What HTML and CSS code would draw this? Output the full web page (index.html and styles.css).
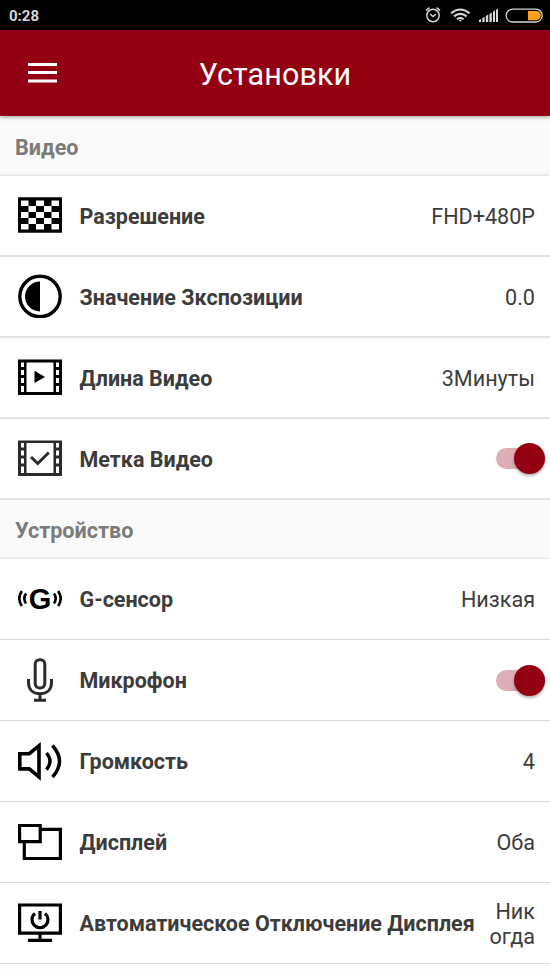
FILE: index.html
```html
<!DOCTYPE html>
<html lang="ru">
<head>
<meta charset="utf-8">
<title>Установки</title>
<link rel="stylesheet" href="styles.css">
</head>
<body>
<div class="status">
  <span class="time">0:28</span>
  <svg class="status-icons" width="120" height="20" viewBox="0 0 120 20" fill="none" stroke="#d6d6d6">
    <circle cx="8" cy="10.5" r="6.2" stroke-width="1.5"/>
    <path d="M5 9l3 2.6L11 9" stroke-width="1.4"/>
    <path d="M1 5.600L4.400 2.700M15 5.600L11.600 2.700" stroke-width="1.6"/>
    <path d="M26 8.200Q35.300 .8 44.600 8.200M29 11.400Q35.300 6.400 41.600 11.400M32 14.300Q35.300 11.800 38.600 14.300" stroke-width="2"/>
    <path d="M33.600 14.800h3.400l-1.700 2z" fill="#d6d6d6" stroke="none"/>
    <path d="M54 17v-2l2-1v3zM57.300 17v-4l2.300-1.300V17zM60.800 17v-6l2.400-1.400V17zM64.400 17V9l2.400-1.600V17zM68 17V6.700l2-1.400V17zM71 17V4.700l2-1V17z" fill="#d6d6d6" stroke="none"/>
    <rect x="81.200" y="4.200" width="36" height="12.800" rx="6.400" stroke-width="1.300"/>
    <path d="M103 6h8.200a4.600 4.600 0 0 1 0 9.200H103z" fill="#f9a11f" stroke="none"/>
  </svg>
</div>
<header class="bar">
  <svg class="menu" width="29" height="20" viewBox="0 0 29 20" fill="#fff"><path d="M0 0h29v3H0zM0 8h29v3H0zM0 16.500h29v3H0z"/></svg>
  <h1>Установки</h1>
</header>
<main>
  <h2 class="first">Видео</h2>
  <section class="video">
    <div class="row">
      <svg class="icon" viewBox="0 0 44 44"><path d="M0 4.300h44v35.400H0z"/><path fill="#fff" d="M3 7.500h7.500V13H3zM18 7.500h8V13h-8zM33.500 7.500H41V13h-7.500zM10.500 13H18v6h-7.500zM26 13h7.500v6H26zM3 19h7.500v6H3zM18 19h8v6h-8zM33.500 19H41v6h-7.500zM10.500 25H18v6h-7.500zM26 25h7.500v6H26zM3 31h7.500v5.500H3zM18 31h8v5.500h-8zM33.500 31H41v5.500h-7.500z"/></svg>
      <span class="label">Разрешение</span><span class="value">FHD+480P</span>
    </div>
    <div class="row">
      <svg class="icon" viewBox="0 0 44 44"><circle cx="22" cy="22.500" r="20.200" fill="none" stroke="#000" stroke-width="3.400"/><path d="M22 7.500v30a15 15 0 0 1 0-30z"/></svg>
      <span class="label">Значение Зкспозиции</span><span class="value">0.0</span>
    </div>
    <div class="row">
      <svg class="icon" viewBox="0 0 44 44"><path fill-rule="evenodd" d="M0 4.500h44v35.500H0zM3 7.500v4.500h3V7.500zM3 15v5h3v-5zM3 23v5h3v-5zM3 31v6h3v-6zM8.500 7.500V37h27V7.500zM38 7.500v4.500h3V7.500zM38 15v5h3v-5zM38 23v5h3v-5zM38 31v6h3v-6zM16.500 15.800V28L27 22z"/></svg>
      <span class="label">Длина Видео</span><span class="value">3Минуты</span>
    </div>
    <div class="row">
      <svg class="icon soft" viewBox="0 0 44 44"><path fill-rule="evenodd" d="M0 4.500h44v35.500H0zM3 7v4.500h3V7zM3 14.500v5h3v-5zM3 22.500v5h3v-5zM3 30.500V37h3v-6.500zM8.500 7v30h27V7zM38 7v4.500h3V7zM38 14.500v5h3v-5zM38 22.500v5h3v-5zM38 30.500V37h3v-6.500z"/><path d="M13 21l6.800 6.500 11-11" fill="none" stroke="#2b2b2b" stroke-width="3"/></svg>
      <span class="label">Метка Видео</span><span class="switch"></span>
    </div>
  </section>
  <h2>Устройство</h2>
  <section class="device">
    <div class="row">
      <svg class="icon" viewBox="0 0 44 44"><text class="g" x="22" y="31.700" text-anchor="middle">G</text><path d="M3.800 14q-5 7.500 0 15M8 16.500q-3.400 5 0 10M40.200 14q5 7.500 0 15M36 16.500q3.400 5 0 10" fill="none" stroke="#000" stroke-width="2.600"/></svg>
      <span class="label">G-сенсор</span><span class="value">Низкая</span>
    </div>
    <div class="row">
      <svg class="icon" viewBox="0 0 44 44"><g fill="none" stroke="#2b2b2b" stroke-width="3"><rect x="17.200" y="1.700" width="9.600" height="28.200" rx="4.300"/><path d="M10.500 21v3.500c0 7 4.500 11.300 11.500 11.300s11.500-4.300 11.500-11.300V21M22 36v6M16 42.300h12"/></g></svg>
      <span class="label">Микрофон</span><span class="switch"></span>
    </div>
    <div class="row">
      <svg class="icon" viewBox="0 0 44 44" fill="none" stroke="#000" stroke-width="3.600"><path d="M1.800 14.700h9.500l9.700-8v31.200l-9.700-8H1.800z"/><path d="M28.500 14q7 8.300 0 16.600M34.500 6.500q14 15.800 0 31.600" stroke-width="3.400"/></svg>
      <span class="label">Громкость</span><span class="value">4</span>
    </div>
    <div class="row">
      <svg class="icon" viewBox="0 0 44 44" fill="none" stroke="#000" stroke-width="3.200"><path d="M1.600 5.500h20.600v16.200H1.600zM22.200 9.300h20.200v29.200H6.300V22"/></svg>
      <span class="label">Дисплей</span><span class="value">Оба</span>
    </div>
    <div class="row">
      <svg class="icon" viewBox="0 0 44 44" fill="none" stroke="#000" stroke-width="3.200"><path d="M1.600 4h40.800v28.200H1.600zM22 32v7M10 39.300h24M22 10v8.500"/><path d="M17 12.500a8 8 0 1 0 10 0"/></svg>
      <span class="label">Автоматическое Отключение Дисплея</span><span class="value">Ник<br>огда</span>
    </div>
  </section>
</main>
</body>
</html>
```
FILE: styles.css
```css
* { box-sizing: border-box; }
html { overflow: hidden; }
body {
  margin: 0;
  background: #fdfdfd;
  color: #3c3c3c;
  font-family: Roboto, "Liberation Sans", sans-serif;
}
.status {
  height: 30px;
  padding: 0 5px 0 9px;
  display: flex;
  align-items: center;
  justify-content: space-between;
  background: #000;
  color: #d6d6d6;
}
.time { font-size: 15px; font-weight: 700; line-height: 30px; padding-top: 1px; }
.bar {
  position: relative;
  height: 86px;
  display: grid;
  grid-template-columns: 1fr auto 1fr;
  align-items: center;
  background: #930012;
  color: #fff;
  box-shadow: 0 1px 4px rgba(0, 0, 0, .4);
}
.menu { margin-left: 28px; }
h1 { margin: 3px 0 0; font-size: 30.500px; font-weight: 400; line-height: 40px; letter-spacing: .100px; }
h2 {
  margin: 0;
  height: 59px;
  padding-left: 15px;
  background: #fafafa;
  color: #7b7b7b;
  font-size: 21.600px;
  font-weight: 700;
  line-height: 62px;
}
.first { height: 60px; line-height: 63px; }
section { background: #fff; box-shadow: 0 -1px 2px rgba(0, 0, 0, .12); }
.row {
  height: 81px;
  padding: 0 15px 0 18px;
  display: flex;
  align-items: center;
  border-bottom: 1px solid #d9d9d9;
}
.video .row { border-bottom: 2px solid #e3e3e3; }
.icon { flex: none; width: 44px; height: 44px; margin-bottom: 1px; }
.soft { fill: #2b2b2b; }
.g { font: 700 29px "Liberation Sans", sans-serif; }
.label {
  flex: 1;
  margin: 2px 0 0 17.500px;
  font-size: 21.500px;
  font-weight: 700;
  line-height: 26px;
  white-space: nowrap;
}
.value { margin-top: 2px; font-size: 21.600px; line-height: 25px; text-align: right; }
.device .value { margin-top: 1px; }
.switch {
  display: flex;
  justify-content: flex-end;
  align-items: center;
  width: 49px;
  height: 21px;
  margin-right: -10px;
  border-radius: 11px;
  background: #dfaeb5;
}
.switch::after {
  content: "";
  width: 31px;
  height: 31px;
  flex: none;
  border-radius: 50%;
  background: #930012;
  box-shadow: 0 2px 3px rgba(0, 0, 0, .3);
}
```
